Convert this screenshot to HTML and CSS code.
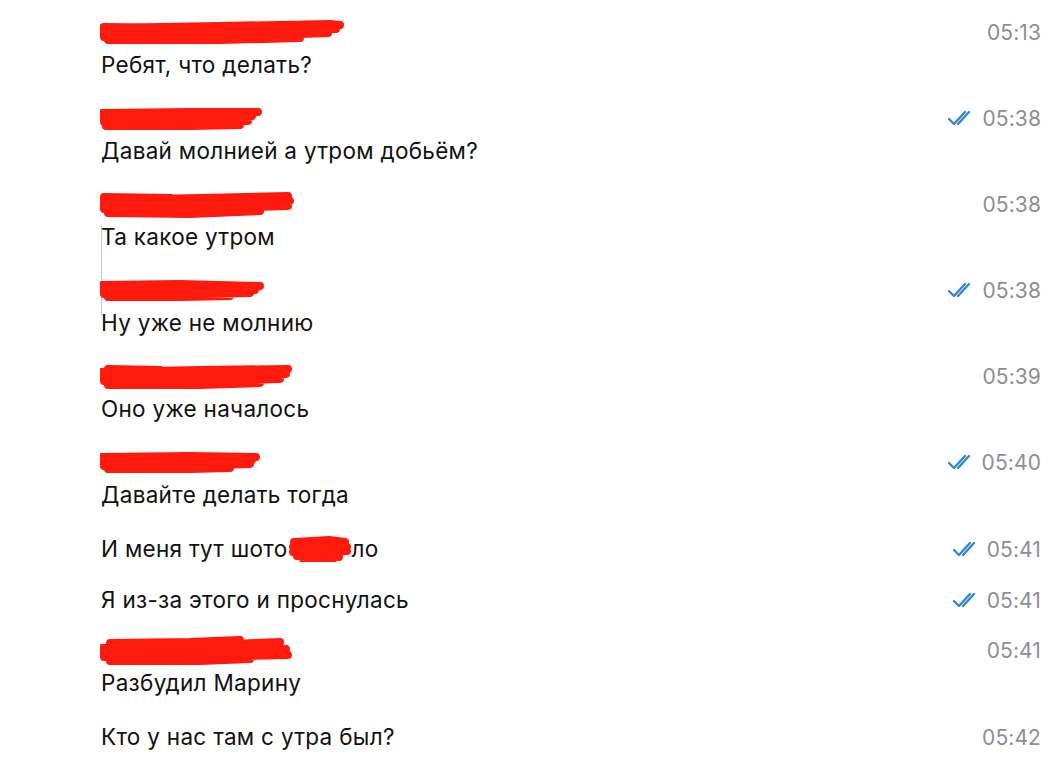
FILE: index.html
```html
<!DOCTYPE html>
<html lang="ru">
<head>
<meta charset="utf-8">
<link rel="stylesheet" href="styles.css">
</head>
<body>
<div class="chat">

  <div class="msg">
    <div class="head">
      <svg class="scr" width="250" height="28" viewBox="0 0 250 28"><path d="M2 10 L120 8 L230 6 L240 7 M3 15 L110 13 L200 11 L236 11 M4 19 L150 18 L228 15 M8 22 L120 22 L200 20 M4 9 L90 10" /></svg>
      <span class="time">05:13</span>
    </div>
    <div class="text">Ребят, что делать?</div>
  </div>

  <div class="msg">
    <div class="head">
      <svg class="scr" width="170" height="28" viewBox="0 0 170 28"><path d="M2 9 L90 8 L158 8 M3 14 L100 13 L152 12 M4 18 L110 18 L148 17 M6 22 L90 22 L140 21" /></svg>
      <span class="time"><svg class="chk" width="28" height="16" viewBox="0 0 28 16"><path d="M1 9 L6 14 L17 2 M10 14 L21 2" /></svg>05:38</span>
    </div>
    <div class="text">Давай молнией а утром добьём?</div>
  </div>

  <div class="msg edge">
    <div class="head">
      <svg class="scr" width="200" height="30" viewBox="0 0 200 30"><path d="M2 11 L100 9 L188 7 M3 16 L120 14 L190 12 M4 20 L120 19 L188 17 M8 24 L90 25 L160 22 M4 8 L70 9" /></svg>
      <span class="time">05:38</span>
    </div>
    <div class="text">Та какое утром</div>
  </div>

  <div class="msg">
    <div class="head">
      <svg class="scr" width="170" height="28" viewBox="0 0 170 28"><path d="M2 9 L80 8 L160 10 M3 14 L100 13 L155 14 M4 18 L90 18 L150 17 M8 21 L80 21 L130 20" /></svg>
      <span class="time"><svg class="chk" width="28" height="16" viewBox="0 0 28 16"><path d="M1 9 L6 14 L17 2 M10 14 L21 2" /></svg>05:38</span>
    </div>
    <div class="text">Ну уже не молнию</div>
  </div>

  <div class="msg">
    <div class="head">
      <svg class="scr" width="200" height="30" viewBox="0 0 200 30"><path d="M2 11 L100 9 L188 8 M3 16 L120 15 L186 13 M4 20 L110 20 L180 18 M8 24 L100 24 L160 22 M8 8 L60 9" /></svg>
      <span class="time">05:39</span>
    </div>
    <div class="text">Оно уже началось</div>
  </div>

  <div class="msg">
    <div class="head">
      <svg class="scr" width="170" height="28" viewBox="0 0 170 28"><path d="M2 9 L90 8 L156 9 M3 14 L100 13 L152 12 M4 18 L80 18 L150 16 M8 21 L90 21 L130 20" /></svg>
      <span class="time"><svg class="chk" width="28" height="16" viewBox="0 0 28 16"><path d="M1 9 L6 14 L17 2 M10 14 L21 2" /></svg>05:40</span>
    </div>
    <div class="text">Давайте делать тогда</div>
  </div>

  <div class="msg solo">
    <div class="head">
      <div class="text">И меня тут шото<span class="blot"><svg width="62" height="26" viewBox="0 0 62 26"><path d="M5 6 L40 4 L56 6 M4 11 L45 10 L58 11 M4 16 L40 16 L58 15 M8 20 L50 21 M14 23 L44 23" /></svg></span>ло</div>
      <span class="time"><svg class="chk" width="28" height="16" viewBox="0 0 28 16"><path d="M1 9 L6 14 L17 2 M10 14 L21 2" /></svg>05:41</span>
    </div>
  </div>

  <div class="msg solo">
    <div class="head">
      <div class="text">Я из-за этого и проснулась</div>
      <span class="time"><svg class="chk" width="28" height="16" viewBox="0 0 28 16"><path d="M1 9 L6 14 L17 2 M10 14 L21 2" /></svg>05:41</span>
    </div>
  </div>

  <div class="msg">
    <div class="head">
      <svg class="scr" width="200" height="32" viewBox="0 0 200 32"><path d="M2 14 L100 11 L180 8 M3 19 L120 17 L186 15 M4 23 L110 23 L188 21 M10 27 L100 27 L150 25 M10 9 L90 8 L140 6" /></svg>
      <span class="time">05:41</span>
    </div>
    <div class="text">Разбудил Марину</div>
  </div>

  <div class="msg solo">
    <div class="head">
      <div class="text">Кто у нас там с утра был?</div>
      <span class="time">05:42</span>
    </div>
  </div>

</div>
</body>
</html>
```

FILE: styles.css
```css
* { box-sizing: border-box; }
html, body {
  margin: 0;
  padding: 0;
  background: #ffffff;
}
body {
  font-family: Inter, "Liberation Sans", Arial, sans-serif;
  color: #111111;
  overflow: hidden;
}
.chat {
  padding: 2px 22px 0 101px;
}
.msg {
  padding: 11px 0 9px;
  position: relative;
}
.msg.solo {
  padding: 16px 0 5px;
}
.msg.edge::before {
  content: "";
  position: absolute;
  left: 0;
  top: 52px;
  height: 90px;
  width: 1px;
  background: #c8c8c8;
}
.head {
  display: flex;
  align-items: center;
  justify-content: space-between;
  height: 38px;
}
.solo .head {
  height: 30px;
}
.text {
  font-size: 22.5px;
  line-height: 28px;
  letter-spacing: 0.3px;
  white-space: nowrap;
  display: flex;
  align-items: center;
}
.time {
  display: flex;
  align-items: center;
  font-size: 21px;
  color: #8e8e93;
  letter-spacing: 0.1px;
}
.scr {
  display: block;
  margin-left: -1px;
}
.scr path, .blot path {
  fill: none;
  stroke: #ff1a0d;
  stroke-width: 8;
  stroke-linecap: round;
  stroke-linejoin: round;
}
.chk {
  margin-right: 6px;
}
.chk path {
  fill: none;
  stroke: #2f86cf;
  stroke-width: 2.3;
  stroke-linecap: round;
  stroke-linejoin: round;
}
.blot {
  display: block;
  width: 62px;
  height: 26px;
  margin: 0 1px;
}
.blot svg {
  display: block;
}
```
